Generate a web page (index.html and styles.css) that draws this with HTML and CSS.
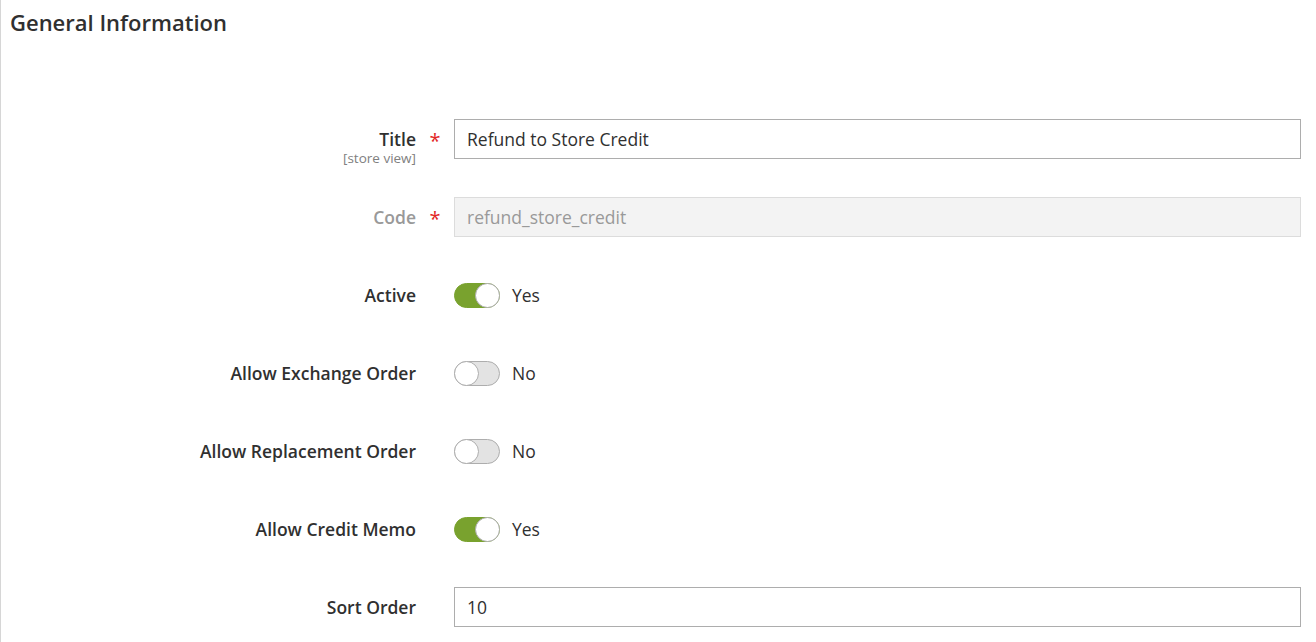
FILE: index.html
```html
<!DOCTYPE html>
<html lang="en">
<head>
    <meta charset="UTF-8">
    <meta name="viewport" content="width=device-width, initial-scale=1.0">
    <title>General Information</title>
    <link rel="stylesheet" href="styles.css">
</head>
<body>
    <div class="page">
        <h2 class="section-title">General Information</h2>
        <div class="fieldset">
            <div class="field">
                <div class="label">
                    <span class="label-text">Title</span>
                    <span class="scope">[store view]</span>
                </div>
                <span class="required">*</span>
                <div class="control">
                    <input class="input" type="text" value="Refund to Store Credit">
                </div>
            </div>
            <div class="field">
                <div class="label disabled">
                    <span class="label-text">Code</span>
                </div>
                <span class="required">*</span>
                <div class="control">
                    <input class="input" type="text" value="refund_store_credit" disabled>
                </div>
            </div>
            <div class="field">
                <div class="label"><span class="label-text">Active</span></div>
                <span class="required"></span>
                <div class="control switch-row">
                    <span class="switch on"></span><span class="switch-text">Yes</span>
                </div>
            </div>
            <div class="field">
                <div class="label"><span class="label-text">Allow Exchange Order</span></div>
                <span class="required"></span>
                <div class="control switch-row">
                    <span class="switch"></span><span class="switch-text">No</span>
                </div>
            </div>
            <div class="field">
                <div class="label"><span class="label-text">Allow Replacement Order</span></div>
                <span class="required"></span>
                <div class="control switch-row">
                    <span class="switch"></span><span class="switch-text">No</span>
                </div>
            </div>
            <div class="field">
                <div class="label"><span class="label-text">Allow Credit Memo</span></div>
                <span class="required"></span>
                <div class="control switch-row">
                    <span class="switch on"></span><span class="switch-text">Yes</span>
                </div>
            </div>
            <div class="field">
                <div class="label"><span class="label-text">Sort Order</span></div>
                <span class="required"></span>
                <div class="control">
                    <input class="input" type="text" value="10">
                </div>
            </div>
        </div>
    </div>
</body>
</html>
```

FILE: styles.css
```css
body {
    margin: 0;
    padding: 0;
    background-color: #fff;
    font-family: "Open Sans", sans-serif;
    color: #303030;
}

.page {
    border-left: 1px solid #d6d6d6;
    min-height: 642px;
    box-sizing: border-box;
    padding: 0 15px 0 9px;
}

.section-title {
    margin: 0;
    padding-top: 7px;
    font-size: 22px;
    font-weight: 600;
    line-height: 30px;
    color: #303030;
}

.fieldset {
    padding-top: 82px;
}

.field {
    display: flex;
    align-items: flex-start;
    height: 40px;
    margin-bottom: 38px;
}

.label {
    width: 406px;
    display: flex;
    flex-direction: column;
    align-items: flex-end;
    padding-top: 9px;
}

.label-text {
    font-size: 17.5px;
    font-weight: 600;
    line-height: 22px;
}

.label.disabled .label-text {
    color: #999;
}

.scope {
    font-size: 13.5px;
    color: #808080;
    line-height: 16px;
    margin-top: 0;
}

.required {
    width: 38px;
    flex: none;
    text-align: center;
    color: #e22626;
    font-size: 20px;
    line-height: 22px;
    padding-top: 11px;
}

.control {
    flex: 1;
}

.input {
    display: block;
    width: 100%;
    height: 40px;
    box-sizing: border-box;
    border: 1px solid #adadad;
    padding: 0 12px;
    font-family: "Open Sans", sans-serif;
    font-size: 17.5px;
    color: #303030;
    background: #fff;
}

.input:disabled {
    background: #f3f3f3;
    border-color: #dcdcdc;
    color: #999;
}

.switch-row {
    display: flex;
    align-items: center;
    height: 40px;
}

.switch {
    position: relative;
    width: 46px;
    height: 25px;
    box-sizing: border-box;
    border: 1px solid #adadad;
    border-radius: 13px;
    background: #e3e3e3;
}

.switch::after {
    content: "";
    position: absolute;
    top: -1px;
    left: -1px;
    width: 25px;
    height: 25px;
    box-sizing: border-box;
    border-radius: 50%;
    border: 1px solid #adadad;
    background: #fff;
}

.switch.on {
    background: #79a22e;
    border-color: #79a22e;
}

.switch.on::after {
    left: auto;
    right: -1px;
    border-color: #adadad;
}

.switch-text {
    margin-left: 12px;
    font-size: 17.5px;
    color: #303030;
}
```
